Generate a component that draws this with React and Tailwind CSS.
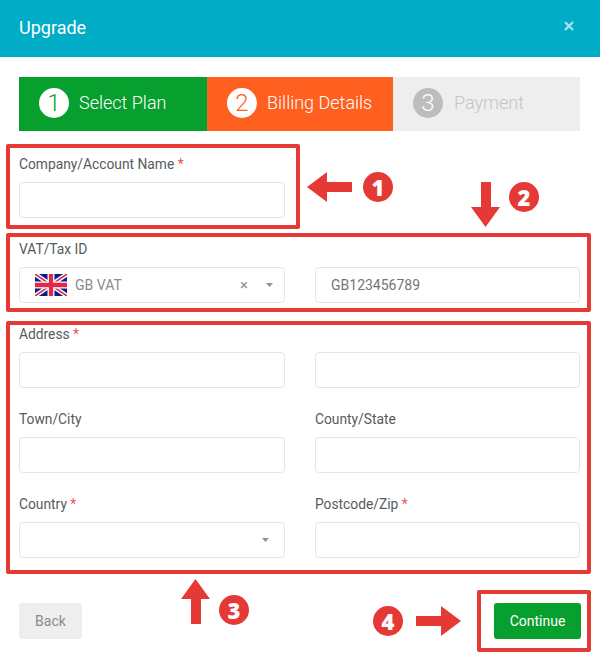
function Field({ label, required, children }) {
  return (
    <div className="flex flex-col">
      <div className="h-[20px] mb-[7px] text-[13.8px] leading-[18px] text-[#565b60]">
        {label}
        {label && required && <span className="text-[#ef5350]"> *</span>}
      </div>
      {children}
    </div>
  );
}
function Input({ value }) {
  return (
    <div className="h-[36px] rounded-[4px] border border-[#e3e5e8] bg-white px-[15px] text-[14px] leading-[34px] text-[#757575]">
      {value}
    </div>
  );
}
function Caret({ color = "#8f9499" }) {
  return (
    <svg width="7" height="4" viewBox="0 0 7 4"><path d="M0 0h7L3.5 4z" fill={color} /></svg>
  );
}
function Flag() {
  return (
    <svg width="32" height="22" viewBox="0 0 60 40" preserveAspectRatio="none">
      <rect width="60" height="40" fill="#0c1c8c" />
      <path d="M0 0L60 40M60 0L0 40" stroke="#fff" strokeWidth="8" />
      <path d="M0 0L60 40M60 0L0 40" stroke="#e0284a" strokeWidth="3" />
      <path d="M30 0V40M0 20H60" stroke="#fff" strokeWidth="13" />
      <path d="M30 0V40M0 20H60" stroke="#e0284a" strokeWidth="8" />
    </svg>
  );
}
function Step({ n, text, bg, textCls, circleCls, gap }) {
  return (
    <div className={`flex items-center pl-[20px] pb-[2px] ${bg}`}>
      <div className={`w-[30px] h-[30px] rounded-full flex items-center justify-center text-[24px] font-light ${circleCls}`}>{n}</div>
      <div className={`${gap} mb-[2px] text-[18px] font-light ${textCls}`}>{text}</div>
    </div>
  );
}
function Badge({ n, cls }) {
  return (
    <div className={`absolute w-[30px] h-[30px] rounded-full bg-[#e53935] text-white flex items-center justify-center text-[22px] font-extrabold font-['Open_Sans',sans-serif] ${cls}`}>{n}</div>
  );
}
function Arrow({ cls, dir }) {
  const paths = {
    left: { w: 45, h: 30, d: "M0 15L20 0V10H45V20H20V30z" },
    right: { w: 45, h: 30, d: "M45 15L25 0V10H0V20H25V30z" },
    down: { w: 29, h: 45, d: "M14.5 45L0 25H10V0H20V25H29z" },
    up: { w: 29, h: 45, d: "M14.5 0L0 20H10V45H20V20H29z" },
  }[dir];
  return (
    <svg className={`absolute ${cls}`} width={paths.w} height={paths.h} viewBox={`0 0 ${paths.w} ${paths.h}`}>
      <path d={paths.d} fill="#e53935" />
    </svg>
  );
}
export default function App() {
  return (
    <div className="relative w-[600px] h-[657px] overflow-hidden bg-white font-['Roboto',sans-serif]">
      <div className="h-[57px] bg-[#00acc6] flex items-center justify-between pl-[19px] pr-[25px]">
        <div className="mb-[2px] text-[18px] text-white">Upgrade</div>
        <svg className="mb-[5px]" width="12" height="12" viewBox="0 0 12 12"><path d="M2 2L10 10M10 2L2 10" stroke="#fff" strokeOpacity="0.65" strokeWidth="2.4" /></svg>
      </div>
      <div className="px-[19px]">
        <div className="mt-[20px] h-[54px] grid grid-cols-[188px_186px_187px]">
          <Step n="1" text="Select Plan" gap="ml-[10px]" bg="bg-[#079f2d]" textCls="text-white" circleCls="bg-white text-[#079f2d]" />
          <Step n="2" text="Billing Details" gap="ml-[10px]" bg="bg-[#ff6020]" textCls="text-white" circleCls="bg-white text-[#ff6020]" />
          <Step n="3" text="Payment" gap="ml-[11px]" bg="bg-[#eeeeee]" textCls="text-[#c4c4c4]" circleCls="bg-[#bdbdbd] text-white" />
        </div>
        <div className="mt-[24px] grid grid-cols-[266px_265px] gap-x-[30px] gap-y-[22px]">
          <Field label="Company/Account Name" required><Input /></Field>
          <div />
          <Field label="VAT/Tax ID">
            <div className="h-[36px] rounded-[4px] border border-[#e3e5e8] flex items-center pl-[15px] pr-[11px]">
              <Flag />
              <span className="ml-[8px] text-[14px] text-[#8a8a8a]">GB VAT</span>
              <span className="ml-auto text-[15px] leading-none text-[#8f9499] mr-[18px]">×</span>
              <Caret />
            </div>
          </Field>
          <Field label=""><Input value="GB123456789" /></Field>
          <Field label="Address" required><Input /></Field>
          <Field label=""><Input /></Field>
          <Field label="Town/City"><Input /></Field>
          <Field label="County/State"><Input /></Field>
          <Field label="Country" required>
            <div className="h-[36px] rounded-[4px] border border-[#e3e5e8] flex items-center justify-end pr-[15px]"><Caret /></div>
          </Field>
          <Field label="Postcode/Zip" required><Input /></Field>
        </div>
        <div className="mt-[45px] flex justify-between">
          <button className="w-[63px] h-[36px] rounded-[3px] bg-[#eeeeee] text-[14px] text-[#8a8a8a]">Back</button>
          <button className="w-[87px] h-[36px] rounded-[3px] bg-[#079f2d] text-[14px] text-white">Continue</button>
        </div>
      </div>

      <div className="absolute left-[6px] top-[144px] w-[294px] h-[85px] border-4 border-[#e53935] rounded-[2px]" />
      <div className="absolute left-[6px] top-[233px] w-[585px] h-[79px] border-4 border-[#e53935] rounded-[2px]" />
      <div className="absolute left-[6px] top-[321px] w-[585px] h-[253px] border-4 border-[#e53935] rounded-[2px]" />
      <div className="absolute left-[477px] top-[590px] w-[114px] h-[62px] border-4 border-[#e53935] rounded-[2px]" />
      <Arrow dir="left" cls="left-[307px] top-[172px]" />
      <Badge n="1" cls="left-[363px] top-[172px]" />
      <Arrow dir="down" cls="left-[471px] top-[182px]" />
      <Badge n="2" cls="left-[509px] top-[182px]" />
      <Arrow dir="up" cls="left-[181px] top-[579px]" />
      <Badge n="3" cls="left-[219px] top-[595px]" />
      <Badge n="4" cls="left-[373px] top-[606px]" />
      <Arrow dir="right" cls="left-[416px] top-[606px]" />
    </div>
  );
}
